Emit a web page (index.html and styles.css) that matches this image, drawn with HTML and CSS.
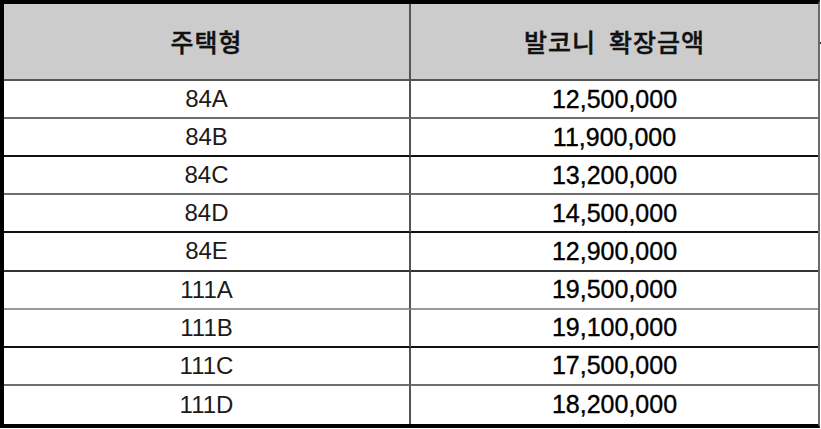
FILE: index.html
```html
<!DOCTYPE html>
<html lang="ko">
<head>
<meta charset="utf-8">
<link rel="stylesheet" href="styles.css">
</head>
<body>
<div class="sheet">
  <div class="cell head c1">주택형</div>
  <div class="cell head c2">발코니 확장금액</div>

  <div class="cell c1 l-a">84A</div><div class="cell c2 num l-a">12,500,000</div>
  <div class="cell c1 l-b">84B</div><div class="cell c2 num l-b">11,900,000</div>
  <div class="cell c1 l-a">84C</div><div class="cell c2 num l-a">13,200,000</div>
  <div class="cell c1 l-b">84D</div><div class="cell c2 num l-b">14,500,000</div>
  <div class="cell c1 l-c">84E</div><div class="cell c2 num l-c">12,900,000</div>
  <div class="cell c1 l-d">111A</div><div class="cell c2 num l-d">19,500,000</div>
  <div class="cell c1 l-b">111B</div><div class="cell c2 num l-b">19,100,000</div>
  <div class="cell c1 l-a">111C</div><div class="cell c2 num l-a">17,500,000</div>
  <div class="cell c1 last">111D</div><div class="cell c2 num last">18,200,000</div>
</div>
</body>
</html>
```
FILE: styles.css
```css
html, body {
  margin: 0;
  padding: 0;
  background: #ffffff;
}

.sheet {
  position: relative;
  box-sizing: border-box;
  width: 820px;
  height: 428px;
  display: grid;
  grid-template-columns: 407px 1fr;
  grid-template-rows: 77px repeat(9, 1fr);
  border-top: 4px solid #000;
  border-left: 4px solid #000;
  border-bottom: 4px solid #000;
  border-right: 2px solid #6a6a6a;
}

.sheet::after {
  content: "";
  position: absolute;
  right: -5px;
  top: 38px;
  width: 3px;
  height: 2px;
  background: #333;
}

.cell {
  display: flex;
  align-items: center;
  justify-content: center;
  box-sizing: border-box;
  font-family: "Liberation Sans", "Noto Sans CJK KR", sans-serif;
  font-size: 24px;
  color: #1f1a1a;
  border-bottom: 1px solid #444;
}

.c1 {
  border-right: 2px solid #555;
}

.head {
  background: #cccccc;
  font-family: "Noto Sans CJK KR", sans-serif;
  font-weight: 500;
  font-size: 25px;
  color: #111;
  letter-spacing: 1px;
  -webkit-text-stroke: 0.4px #111;
  border-bottom: 2px solid #555;
  padding-bottom: 2px;
}

.head.c2 {
  word-spacing: 5px;
}

.num {
  font-size: 25px;
  color: #000;
  -webkit-text-stroke: 0.35px #000;
}

.l-a { border-bottom: 2px solid #6e6e6e; }
.l-b { border-bottom: 2px solid #111; }
.l-c { border-bottom: 2px solid #333; }
.l-d { border-bottom: 2px solid #999; }
.last { border-bottom: none; }
```
